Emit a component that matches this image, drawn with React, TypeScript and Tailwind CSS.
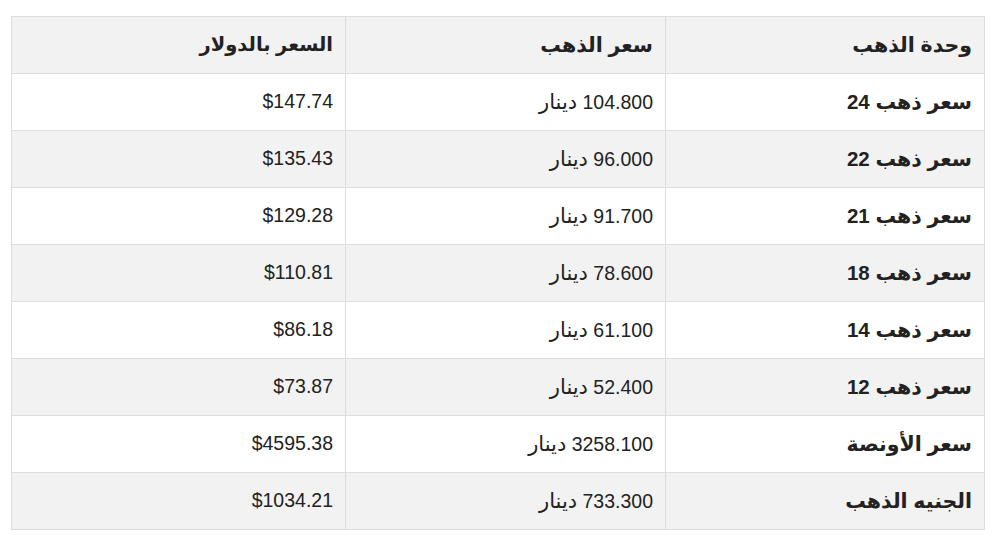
import React from 'react';

const rows: [string, string, string][] = [
  ['سعر ذهب 24', '104.800', '$147.74'],
  ['سعر ذهب 22', '96.000', '$135.43'],
  ['سعر ذهب 21', '91.700', '$129.28'],
  ['سعر ذهب 18', '78.600', '$110.81'],
  ['سعر ذهب 14', '61.100', '$86.18'],
  ['سعر ذهب 12', '52.400', '$73.87'],
  ['سعر الأونصة', '3258.100', '$4595.38'],
  ['الجنيه الذهب', '733.300', '$1034.21'],
];

const cell = 'h-[57px] border border-[#dddddd] px-3 text-right align-middle';

const App = () => {
  return (
    <div className="bg-white w-[1005px] h-[550px] pt-4 pl-[11px]">
      <table
        dir="rtl"
        className="w-[973px] border-collapse table-fixed text-[19.5px] text-[#222222]"
        style={{ fontFamily: '"Liberation Sans", "DejaVu Sans", sans-serif' }}
      >
        <colgroup>
          <col className="w-[319px]" />
          <col className="w-[320px]" />
          <col className="w-[334px]" />
        </colgroup>
        <thead>
          <tr className="bg-[#f2f2f2]">
            <th className={`${cell} font-bold text-[20.5px]`}>وحدة الذهب</th>
            <th className={`${cell} font-bold text-[20.5px]`}>سعر الذهب</th>
            <th className={`${cell} font-bold text-[19.5px]`}>السعر بالدولار</th>
          </tr>
        </thead>
        <tbody>
          {rows.map((r, i) => (
            <tr key={r[0]} className={i % 2 === 1 ? 'bg-[#f2f2f2]' : 'bg-white'}>
              <td className={`${cell} font-bold text-[20.5px]`}>{r[0]}</td>
              <td className={cell}>
                {r[1]} <span className="text-[21px]">دينار</span>
              </td>
              <td className={cell}>{r[2]}</td>
            </tr>
          ))}
        </tbody>
      </table>
    </div>
  );
};

export default App;
